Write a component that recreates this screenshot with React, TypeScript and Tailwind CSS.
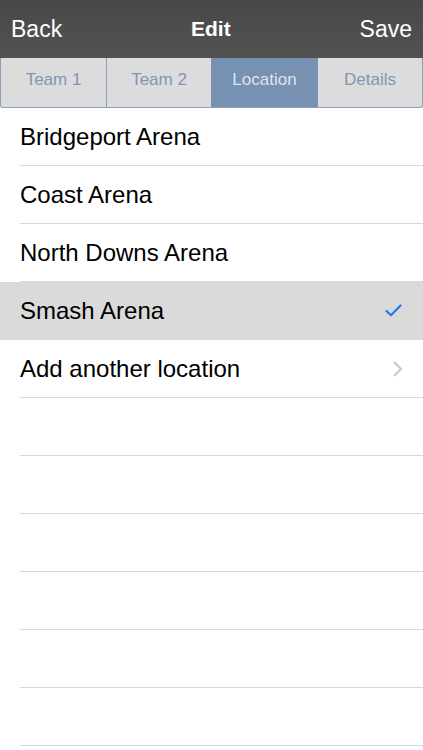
const rows = [
  { name: 'Bridgeport Arena' },
  { name: 'Coast Arena' },
  { name: 'North Downs Arena' },
  { name: 'Smash Arena', selected: true },
  { name: 'Add another location', more: true },
];

const tabs = [
  { label: 'Team 1', w: 'w-[105px]' },
  { label: 'Team 2', w: 'w-[105px]' },
  { label: 'Location', w: 'w-[107px]' },
  { label: 'Details', w: 'flex-1' },
];

export default function App() {
  return (
    <div className="w-[423px] h-[750px] overflow-hidden bg-white font-['Liberation_Sans',Arial,sans-serif]">
      <header className="h-[58px] flex items-center justify-between px-[11px] bg-gradient-to-b from-[#484848] to-[#525252] text-white">
        <span className="text-[23px]">Back</span>
        <span className="text-[21px] font-bold">Edit</span>
        <span className="text-[23px]">Save</span>
      </header>

      <nav className="h-[50px] flex bg-[#dcdcdc] border-x border-b border-[#8a9fbd] rounded-b-[3px] text-[17px] text-[#8196b4]">
        {tabs.map((t, i) => (
          <div
            key={t.label}
            className={
              (i === 2 ? 'bg-[#7791b3] text-[#dde4ee] ' : '') +
              (i === 1 ? 'border-l border-[#8a9fbd] ' : '') +
              t.w +
              ' flex items-center justify-center pb-[6px]'
            }
          >
            {t.label}
          </div>
        ))}
      </nav>

      <ul>
        {rows.map((r) => (
          <li
            key={r.name}
            className={(r.selected ? 'bg-[#dadada] ' : '') + 'h-[58px] flex items-center pl-[20px]'}
          >
            <div className="flex-1 h-full flex items-center justify-between pr-[21px] border-b border-[#d9d9d9] text-[24px] text-black">
              <span>{r.name}</span>
              {r.selected && (
                <svg width="17" height="13" viewBox="0 0 17 13" className="-mt-[1px]">
                  <path d="M1.5 7 L6 11.2 L15.5 1.5" fill="none" stroke="#1e7cf1" strokeWidth="2.2" strokeLinecap="round" strokeLinejoin="round" />
                </svg>
              )}
              {r.more && (
                <svg width="10" height="16" viewBox="0 0 10 16" className="-mr-[1px]">
                  <path d="M1.5 1.5 L8 8 L1.5 14.5" fill="none" stroke="#c7c7cc" strokeWidth="2" strokeLinecap="round" strokeLinejoin="round" />
                </svg>
              )}
            </div>
          </li>
        ))}
        {Array.from({ length: 6 }).map((_, i) => (
          <li key={i} className="h-[58px] pl-[20px]">
            <div className="h-full border-b border-[#d9d9d9]" />
          </li>
        ))}
      </ul>
    </div>
  );
}
